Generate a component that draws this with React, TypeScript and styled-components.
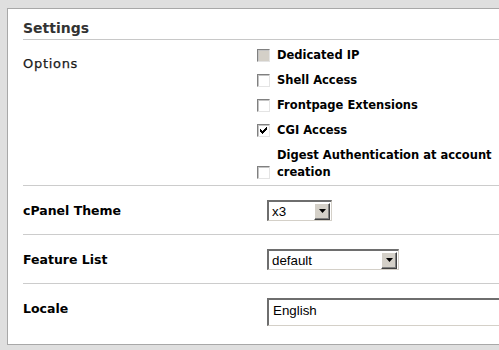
import React from "react";
import styled, { createGlobalStyle } from "styled-components";

const GlobalStyle = createGlobalStyle`
  html, body { margin: 0; padding: 0; }
  body {
    background: #dfdfdf;
    overflow: hidden;
    font-family: "DejaVu Sans", Verdana, sans-serif;
  }
`;

const Page = styled.div`
  padding: 8px 0 0 7px;
  width: 560px;
`;

const Panel = styled.section`
  background: #ffffff;
  border: 1px solid #a8a8a8;
  padding: 11px 0 0 15px;
`;

const Heading = styled.h3`
  margin: 0;
  font-size: 14px;
  line-height: 17px;
  font-weight: bold;
  color: #333333;
  padding: 0 0 2px;
  border-bottom: 1px solid #c8c8c8;
`;

const Row = styled.div<{ $top: number; $bottom: number; $last?: boolean }>`
  display: grid;
  grid-template-columns: 234px 1fr;
  align-items: start;
  padding: ${(p) => p.$top}px 0 ${(p) => p.$bottom}px;
  border-bottom: ${(p) => (p.$last ? "none" : "1px solid #cccccc")};
`;

const Label = styled.div<{ $offset?: number; $plain?: boolean }>`
  margin-top: ${(p) => p.$offset ?? 0}px;
  font-size: ${(p) => (p.$plain ? "13px" : "12.5px")};
  letter-spacing: ${(p) => (p.$plain ? "0.7px" : "0")};
  line-height: 21px;
  font-weight: ${(p) => (p.$plain ? "normal" : "bold")};
  color: ${(p) => (p.$plain ? "#1a1a1a" : "#000000")};
  -webkit-text-stroke: ${(p) => (p.$plain ? "0.25px #1a1a1a" : "0")};
`;

const OptionList = styled.div`
  display: flex;
  flex-direction: column;
  gap: 8px;
  width: 240px;
`;

const OptionItem = styled.label`
  display: grid;
  grid-template-columns: 13px 1fr;
  column-gap: 7px;
  font-size: 11.5px;
  line-height: 17px;
  font-weight: bold;
  color: #000000;
`;

const Box = styled.span<{ $disabled?: boolean }>`
  align-self: end;
  margin-bottom: 2px;
  width: 13px;
  height: 13px;
  box-sizing: border-box;
  display: flex;
  align-items: center;
  justify-content: center;
  background: ${(p) => (p.$disabled ? "#d4d0c8" : "#ffffff")};
  border-style: solid;
  border-width: 1px;
  border-color: #808080 #e4e4e4 #e4e4e4 #808080;
  box-shadow: inset 1px 1px 0 #c4c4c4;
`;

const Field = styled.div`
  padding-left: 10px;
`;

const Select = styled.div<{ $width: number }>`
  width: ${(p) => p.$width}px;
  height: 21px;
  box-sizing: border-box;
  display: flex;
  align-items: center;
  background: #ffffff;
  border-style: solid;
  border-width: 2px 1px 1px 2px;
  border-color: #6e6e6e #d4d0c8 #d4d0c8 #6e6e6e;
  font-family: "Liberation Sans", Arial, sans-serif;
  font-size: 13.33px;
  color: #000000;
`;

const SelectText = styled.span`
  flex: 1;
  padding-left: 3px;
  line-height: 17px;
`;

const DropButton = styled.span`
  width: 16px;
  height: 17px;
  margin-right: 1px;
  box-sizing: border-box;
  display: flex;
  align-items: center;
  justify-content: center;
  background: #d4d0c8;
  border-style: solid;
  border-width: 1px;
  border-color: #ffffff #404040 #404040 #ffffff;
  box-shadow: inset -1px -1px 0 #808080;
`;

const TextBox = styled.div`
  width: 260px;
  height: 28px;
  box-sizing: border-box;
  padding: 2px 4px 0;
  background: #ffffff;
  border-style: solid;
  border-width: 2px 1px 1px 2px;
  border-color: #6e6e6e #d4d0c8 #d4d0c8 #6e6e6e;
  font-family: "Liberation Sans", Arial, sans-serif;
  font-size: 13.33px;
  line-height: 17px;
  color: #000000;
`;

const Arrow = () => (
  <svg width="7" height="4" viewBox="0 0 7 4">
    <path d="M0 0h7L3.5 4z" fill="#000" />
  </svg>
);

const Check = () => (
  <svg width="7" height="7" viewBox="0 0 7 7" shapeRendering="crispEdges">
    <path d="M0 2h1v1h1v1h1V3h1V2h1V1h1V0h1v3H6v1H5v1H4v1H3v1H2V6H1V5H0z" fill="#000" />
  </svg>
);

const options: { label: string; checked?: boolean; disabled?: boolean }[] = [
  { label: "Dedicated IP", disabled: true },
  { label: "Shell Access" },
  { label: "Frontpage Extensions" },
  { label: "CGI Access", checked: true },
  { label: "Digest Authentication at account creation" },
];

const Dropdown = ({ value, width }: { value: string; width: number }) => (
  <Select $width={width}>
    <SelectText>{value}</SelectText>
    <DropButton>
      <Arrow />
    </DropButton>
  </Select>
);

export default function App() {
  return (
    <>
      <GlobalStyle />
      <Page>
        <Panel>
          <Heading>Settings</Heading>
          <Row $top={7} $bottom={4}>
            <Label $offset={6} $plain>
              Options
            </Label>
            <OptionList>
              {options.map((o) => (
                <OptionItem key={o.label}>
                  <Box $disabled={o.disabled}>{o.checked && <Check />}</Box>
                  <span>{o.label}</span>
                </OptionItem>
              ))}
            </OptionList>
          </Row>
          <Row $top={14} $bottom={13}>
            <Label>cPanel Theme</Label>
            <Field>
              <Dropdown value="x3" width={65} />
            </Field>
          </Row>
          <Row $top={14} $bottom={13}>
            <Label>Feature List</Label>
            <Field>
              <Dropdown value="default" width={132} />
            </Field>
          </Row>
          <Row $top={14} $bottom={18} $last>
            <Label>Locale</Label>
            <Field>
              <TextBox>English</TextBox>
            </Field>
          </Row>
        </Panel>
      </Page>
    </>
  );
}
